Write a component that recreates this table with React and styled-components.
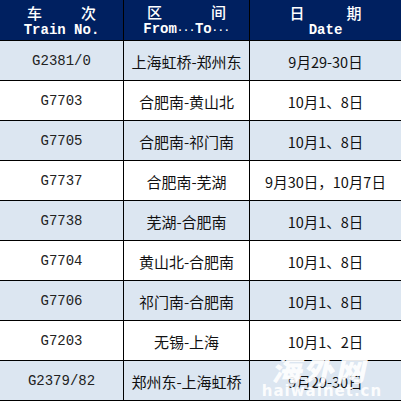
import React from "react";
import styled, { createGlobalStyle } from "styled-components";

const trains = [
  { id: 1, no: "G2381/0", route: "上海虹桥-郑州东", date: "9月29-30日" },
  { id: 2, no: "G7703", route: "合肥南-黄山北", date: "10月1、8日" },
  { id: 3, no: "G7705", route: "合肥南-祁门南", date: "10月1、8日" },
  { id: 4, no: "G7737", route: "合肥南-芜湖", date: "9月30日，10月7日" },
  { id: 5, no: "G7738", route: "芜湖-合肥南", date: "10月1、8日" },
  { id: 6, no: "G7704", route: "黄山北-合肥南", date: "10月1、8日" },
  { id: 7, no: "G7706", route: "祁门南-合肥南", date: "10月1、8日" },
  { id: 8, no: "G7203", route: "无锡-上海", date: "10月1、2日" },
  { id: 9, no: "G2379/82", route: "郑州东-上海虹桥", date: "9月29-30日" },
];

const GlobalStyle = createGlobalStyle`
  body {
    margin: 0;
    background: #ffffff;
  }
`;

const StyledTable = styled.div`
  position: relative;
  width: 401px;
  display: grid;
  grid-template-columns: 124px 126px 151px;
  grid-template-rows: 41px repeat(9, 40px);
  border-right: 1px solid #000;
  box-sizing: border-box;
`;

const StyledHead = styled.div`
  background: #002060;
  color: #ffffff;
  display: flex;
  flex-direction: column;
  align-items: center;
  justify-content: center;
  border-bottom: 1px solid #000;
  border-right: ${(p) => (p.last ? "none" : "1px solid #000")};
  box-sizing: border-box;
`;

const StyledHeadCn = styled.div`
  font-family: "Noto Sans CJK SC", sans-serif;
  font-size: 15px;
  font-weight: 500;
  line-height: 19px;
  letter-spacing: ${(p) => p.spacing}px;
  margin-right: -${(p) => p.spacing}px;
  white-space: pre;
`;

const StyledHeadEn = styled.div`
  font-family: "Liberation Mono", monospace;
  font-size: 14px;
  font-weight: 700;
  line-height: 16px;
  white-space: pre;
`;

const StyledDots = styled.span`
  font-family: "Liberation Mono", monospace;
  font-size: 10px;
  font-weight: 700;
`;

const StyledCell = styled.div`
  background: ${(p) => (p.shaded ? "#dce6f1" : "#ffffff")};
  display: flex;
  align-items: center;
  justify-content: center;
  border-bottom: 1px solid #000;
  border-right: ${(p) => (p.last ? "none" : "1px solid #000")};
  box-sizing: border-box;
  color: #111;
  white-space: nowrap;
  padding-top: 1px;
`;

const StyledNo = styled.span`
  font-family: "Liberation Mono", monospace;
  font-size: 14px;
  color: #222;
`;

const StyledRoute = styled.span`
  font-family: "Noto Sans CJK SC", sans-serif;
  font-size: 15px;
`;

const StyledDate = styled.span`
  font-family: "Noto Sans CJK SC", sans-serif;
  font-size: 14.5px;
`;

const StyledWatermark = styled.div`
  position: absolute;
  left: 252px;
  top: 352px;
  width: 140px;
  display: flex;
  flex-direction: column;
  align-items: center;
  color: rgba(255, 255, 255, 0.92);
  pointer-events: none;
`;

const StyledMarkCn = styled.div`
  font-family: "Noto Sans CJK SC", sans-serif;
  font-size: 30px;
  font-weight: 900;
  line-height: 32px;
  letter-spacing: 2px;
  transform: skewX(-12deg);
`;

const StyledMarkEn = styled.div`
  font-family: "DejaVu Sans", sans-serif;
  font-size: 15px;
  font-weight: 700;
  line-height: 14px;
  letter-spacing: 1px;
`;

function App() {
  return (
    <>
      <GlobalStyle />
      <StyledTable>
        <StyledHead>
          <StyledHeadCn spacing={3}>车　　次</StyledHeadCn>
          <StyledHeadEn>Train No.</StyledHeadEn>
        </StyledHead>
        <StyledHead>
          <StyledHeadCn spacing={1}>区　　　间</StyledHeadCn>
          <StyledHeadEn>
            From<StyledDots>···</StyledDots>To<StyledDots>···</StyledDots>
          </StyledHeadEn>
        </StyledHead>
        <StyledHead last>
          <StyledHeadCn spacing={4}>日　　期</StyledHeadCn>
          <StyledHeadEn>Date</StyledHeadEn>
        </StyledHead>
        {trains.map((t) => (
          <React.Fragment key={t.id}>
            <StyledCell shaded={t.id % 2 === 1}>
              <StyledNo>{t.no}</StyledNo>
            </StyledCell>
            <StyledCell shaded={t.id % 2 === 1}>
              <StyledRoute>{t.route}</StyledRoute>
            </StyledCell>
            <StyledCell shaded={t.id % 2 === 1} last>
              <StyledDate>{t.date}</StyledDate>
            </StyledCell>
          </React.Fragment>
        ))}
        <StyledWatermark>
          <StyledMarkCn>海外网</StyledMarkCn>
          <StyledMarkEn>haiwainet.cn</StyledMarkEn>
        </StyledWatermark>
      </StyledTable>
    </>
  );
}

export default App;
